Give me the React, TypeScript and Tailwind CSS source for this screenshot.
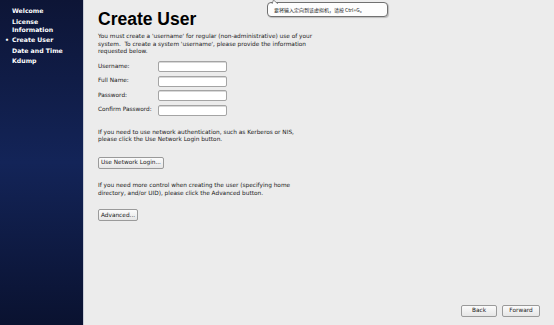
const sidebarItems: { label: string[]; current?: boolean }[] = [
  { label: ['Welcome'] },
  { label: ['License', 'Information'] },
  { label: ['Create User'], current: true },
  { label: ['Date and Time'] },
  { label: ['Kdump'] },
];

const fields = ['Username:', 'Full Name:', 'Password:', 'Confirm Password:'];

const body = "font-['DejaVu_Sans',sans-serif] text-[5.8px] leading-[7.7px] text-[#1a1a1a] whitespace-nowrap";

function GtkButton({ children, className = '' }: { children: React.ReactNode; className?: string }) {
  return (
    <button
      type="button"
      className={`flex h-[12px] items-center justify-center rounded-[2px] border border-[#9a9a9a] bg-gradient-to-b from-[#fbfbfb] to-[#e6e6e6] px-[3px] ${body} leading-none ${className}`}
    >
      {children}
    </button>
  );
}

function Sidebar() {
  return (
    <aside className="flex h-full w-[84px] shrink-0 flex-col border-r border-[#c8ccd6] bg-gradient-to-b from-[#0d1536] via-[#132458] to-[#0a1230] pt-[7px]">
      <ul className="flex flex-col gap-[2.5px]">
        {sidebarItems.map((item) => (
          <li
            key={item.label[0]}
            className="relative pl-[12px] font-['DejaVu_Sans',sans-serif] text-[6.2px] font-bold leading-[8px] text-white"
          >
            {item.current && <span className="absolute left-[5px] top-0">•</span>}
            {item.label.map((line) => (
              <div key={line}>{line}</div>
            ))}
          </li>
        ))}
      </ul>
    </aside>
  );
}

function Tooltip() {
  return (
    <div className="absolute left-[267px] top-[2px] flex h-[15px] w-[121px] items-center rounded-[4px] border border-[#707070] bg-[#fdfdfd] pl-[6px] shadow-[1px_1px_1px_rgba(0,0,0,0.2)]">
      <svg className="absolute left-[3px] top-[-3px]" width="10" height="4" viewBox="0 0 10 4">
        <path d="M1 4 L2.5 0 L7 4" fill="#fdfdfd" stroke="#707070" strokeWidth="0.8" />
      </svg>
      <span className="font-['Noto_Sans_CJK_SC','DejaVu_Sans',sans-serif] text-[5px] leading-none text-[#222]">
        要将输入定向到该虚拟机，请按 Ctrl+G。
      </span>
    </div>
  );
}

export default function App() {
  return (
    <div className="relative flex h-[325px] w-[554px] overflow-hidden bg-[#ececec]">
      <Sidebar />
      <main className="flex min-w-0 flex-1 flex-col pl-[14px] pr-[14px] pt-[9px] pb-[8px]">
        <h1 className="font-['Liberation_Sans',Arial,sans-serif] text-[17.5px] font-bold leading-[20px] text-black">
          Create User
        </h1>
        <p className={`${body} mt-[4px]`}>
          You must create a 'username' for regular (non-administrative) use of your
          <br />
          system.&nbsp; To create a system 'username', please provide the information
          <br />
          requested below.
        </p>
        <div className="mt-[5px] grid grid-cols-[60px_69px] gap-y-[3.5px]">
          {fields.map((f) => (
            <div key={f} className="contents">
              <span className={`${body} self-center`}>{f}</span>
              <div className="h-[11px] rounded-[2px] border border-[#a4a4a4] bg-white shadow-[inset_0_1px_0_#d8d8d8]" />
            </div>
          ))}
        </div>
        <p className={`${body} mt-[13px]`}>
          If you need to use network authentication, such as Kerberos or NIS,
          <br />
          please click the Use Network Login button.
        </p>
        <GtkButton className="mt-[13px] w-[66px]">Use Network Login...</GtkButton>
        <p className={`${body} mt-[13px]`}>
          If you need more control when creating the user (specifying home
          <br />
          directory, and/or UID), please click the Advanced button.
        </p>
        <GtkButton className="mt-[12px] w-[40px]">Advanced...</GtkButton>
        <div className="mt-auto flex justify-end gap-[5px]">
          <GtkButton className="w-[36px]">Back</GtkButton>
          <GtkButton className="w-[38px]">Forward</GtkButton>
        </div>
      </main>
      <Tooltip />
    </div>
  );
}
